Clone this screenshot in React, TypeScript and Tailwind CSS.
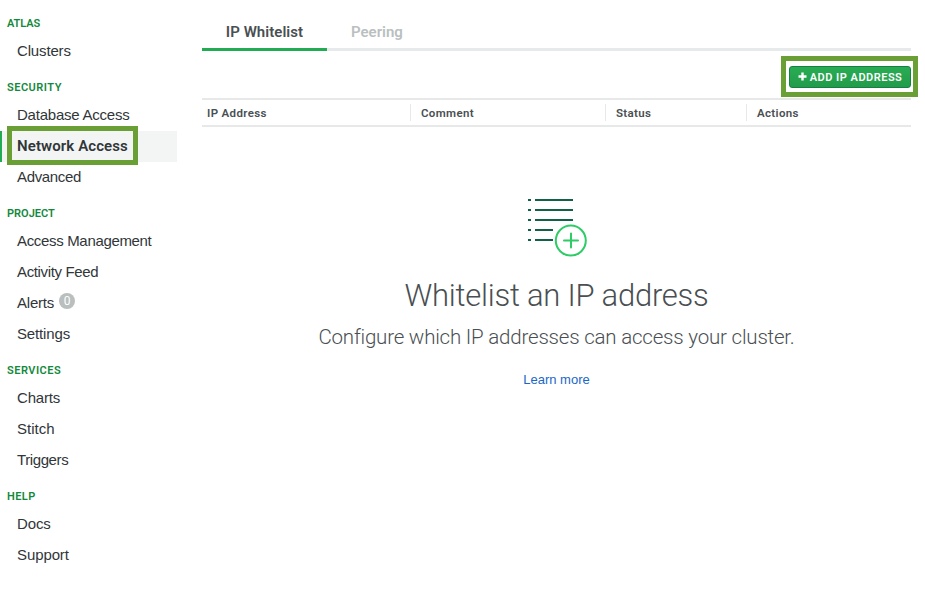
import { useState } from 'react';
import clsx from 'clsx';

interface NavItem {
  label: string;
  tracking: string;
  badge?: number;
}

interface NavSection {
  title: string;
  tracking: string;
  items: NavItem[];
}

const sections: NavSection[] = [
  { title: 'Atlas', tracking: 'tracking-[-0.1px]', items: [{ label: 'Clusters', tracking: 'tracking-[-0.15px]' }] },
  {
    title: 'Security',
    tracking: 'tracking-[0.5px]',
    items: [
      { label: 'Database Access', tracking: 'tracking-[-0.23px]' },
      { label: 'Network Access', tracking: 'tracking-[-0.3px]' },
      { label: 'Advanced', tracking: 'tracking-[-0.35px]' },
    ],
  },
  {
    title: 'Project',
    tracking: 'tracking-normal',
    items: [
      { label: 'Access Management', tracking: 'tracking-[-0.33px]' },
      { label: 'Activity Feed', tracking: 'tracking-[-0.35px]' },
      { label: 'Alerts', tracking: 'tracking-[-0.2px]', badge: 0 },
      { label: 'Settings', tracking: 'tracking-[-0.15px]' },
    ],
  },
  {
    title: 'Services',
    tracking: 'tracking-[0.5px]',
    items: [
      { label: 'Charts', tracking: 'tracking-[-0.2px]' },
      { label: 'Stitch', tracking: 'tracking-normal' },
      { label: 'Triggers', tracking: 'tracking-[-0.4px]' },
    ],
  },
  {
    title: 'Help',
    tracking: 'tracking-[0.4px]',
    items: [
      { label: 'Docs', tracking: 'tracking-[-0.1px]' },
      { label: 'Support', tracking: 'tracking-[-0.1px]' },
    ],
  },
];

function Sidebar() {
  const [active, setActive] = useState('Network Access');

  return (
    <nav className="w-[177px] shrink-0 pt-[3px]">
      {sections.map((section) => (
        <section key={section.title}>
          <h3
            className={clsx(
              'pt-3.5 pb-[5px] pl-[7px] text-[11px] leading-[14px] font-semibold uppercase text-[#13893b]',
              section.tracking
            )}
          >
            {section.title}
          </h3>
          <ul>
            {section.items.map((item) => {
              const isActive = item.label === active;
              return (
                <li key={item.label}>
                  <button
                    onClick={() => setActive(item.label)}
                    className={clsx(
                      'relative flex h-[31px] w-full items-center border-l-2 pl-[15px] text-[15px] whitespace-nowrap text-[#313639]',
                      isActive
                        ? 'border-[#21ab52] bg-[#f3f5f4] font-semibold tracking-[0.1px]'
                        : ['border-transparent font-["Liberation_Sans",sans-serif]', item.tracking]
                    )}
                  >
                    {item.label}
                    {item.badge !== undefined && (
                      <span className="mb-1.5 ml-[5px] flex size-4 items-center justify-center rounded-full bg-[#b9bebe] font-[Roboto,sans-serif] text-[12px] tracking-normal text-white">
                        {item.badge}
                      </span>
                    )}
                    {isActive && (
                      <span className="pointer-events-none absolute -top-[5px] left-[5px] h-[39px] w-[131px] border-5 border-[#699f35]" />
                    )}
                  </button>
                </li>
              );
            })}
          </ul>
        </section>
      ))}
    </nav>
  );
}

function ListIcon() {
  return (
    <svg className="ml-0.5" width="60" height="60" viewBox="0 0 60 60" fill="none" aria-hidden="true">
      <path
        d="M0 2h3M7 2h38M0 12h3M7 12h38M0 22h3M7 22h38M0 32h3M7 32h18M0 42h3M7 42h18"
        stroke="#116149"
        strokeWidth="2"
      />
      <circle cx="42.8" cy="42.6" r="15" stroke="#2dcc66" strokeWidth="2" />
      <path d="M36 42.6h14M43 35.6v14" stroke="#2dcc66" strokeWidth="2" strokeLinecap="round" />
    </svg>
  );
}

export default function App() {
  return (
    <div className="flex h-[592px] w-[925px] overflow-hidden bg-white font-[Roboto,sans-serif] text-[#494f52]">
      <Sidebar />

      <main className="ml-[25px] w-[709px]">
        {/* Tabs */}
        <div className="flex h-[51px] text-[15px] font-semibold">
          <button className="w-[125px] border-b-3 border-[#21ab52] pt-4 tracking-[0.05px]">IP Whitelist</button>
          <div className="flex-1 border-b-3 border-[#e7eaea]">
            <button className="pt-[21px] pl-6 tracking-normal text-[#babfbf]">Peering</button>
          </div>
        </div>

        {/* Actions bar */}
        <div className="flex h-[47px] justify-end pt-[15px]">
          <button className="relative flex h-[22px] w-[122px] items-center justify-center gap-[3px] rounded-[3px] border border-[#168040] bg-linear-to-b from-[#28ac53] to-[#229c4b] text-[11px] font-semibold whitespace-nowrap text-white">
            <svg className="mb-px" width="9" height="9" viewBox="0 0 9 9" aria-hidden="true">
              <path d="M4.5 .5v8M.5 4.5h8" stroke="white" strokeWidth="2.4" />
            </svg>
            <span className="pt-0.5 tracking-[0.5px]">ADD IP ADDRESS</span>
            <span className="pointer-events-none absolute -top-[11px] -left-[9px] h-[41px] w-[137px] border-5 border-[#699f35]" />
          </button>
        </div>

        {/* Table header */}
        <div className="flex h-[29px] items-center border-y-2 border-[#e7e9e9] text-[11.5px] font-semibold tracking-[0.35px]">
          <div className="w-[208px] pt-0.5 pl-[5px]">IP Address</div>
          <div className="flex h-[17px] w-[195px] items-center border-l border-[#e7e9e9] pt-0.5 pl-2.5">Comment</div>
          <div className="flex h-[17px] w-[141px] items-center border-l border-[#e7e9e9] pt-0.5 pl-2.5">Status</div>
          <div className="flex h-[17px] flex-1 items-center border-l border-[#e7e9e9] pt-0.5 pl-2.5">Actions</div>
        </div>

        {/* Empty state */}
        <div className="flex flex-col items-center pt-[71px] whitespace-nowrap">
          <ListIcon />
          <h1 className="mt-[18px] text-[31px] leading-10 font-light tracking-[-0.25px]">Whitelist an IP address</h1>
          <p className="mt-[7px] text-[20.5px] leading-7 font-light tracking-[-0.2px]">
            Configure which IP addresses can access your cluster.
          </p>
          <a href="#" className="mt-[19px] font-['Liberation_Sans',sans-serif] text-[13px] leading-5 text-[#1a67c8]">
            Learn more
          </a>
        </div>
      </main>
    </div>
  );
}
